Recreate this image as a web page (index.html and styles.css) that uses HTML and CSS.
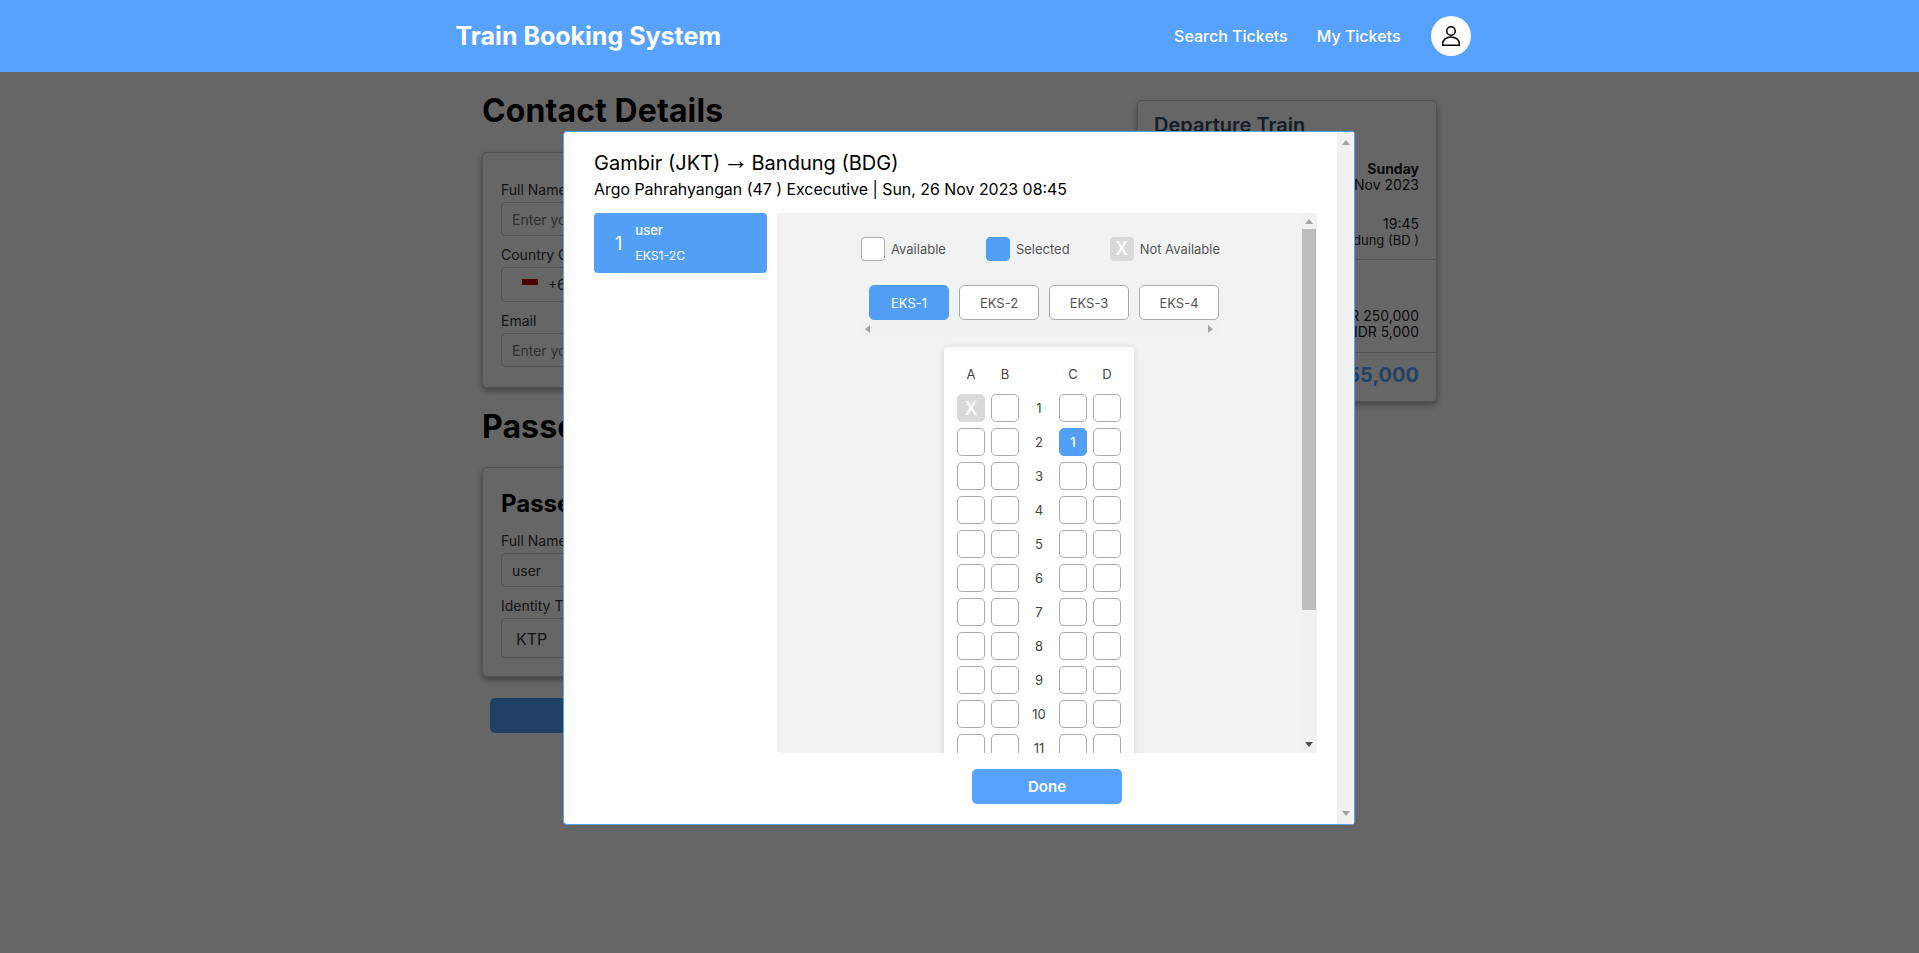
FILE: index.html
```html
<!DOCTYPE html>
<html lang="en">
<head>
    <meta charset="UTF-8">
    <meta name="viewport" content="width=device-width, initial-scale=1.0">
    <title>Train Booking System</title>
    <link rel="stylesheet" href="styles.css">
</head>
<body>
    <header class="topbar">
        <div class="topbar-inner">
            <div class="brand">Train Booking System</div>
            <nav class="topnav">
                <a href="#search">Search Tickets</a>
                <a href="#tickets">My Tickets</a>
                <span class="avatar">
                    <svg width="40" height="40" viewBox="0 0 40 40" fill="none" stroke="#000" stroke-width="1.5">
                        <circle cx="20" cy="15" r="4.3"/>
                        <path d="M11.7 29.3v-1.6c0-4 3.6-6.6 8.3-6.6s8.3 2.6 8.3 6.6v1.6z"/>
                    </svg>
                </span>
            </nav>
        </div>
    </header>

    <main class="page">
        <div class="forms">
            <h1>Contact Details</h1>
            <section class="card contact-card">
                <div class="field">
                    <label>Full Name</label>
                    <input type="text" placeholder="Enter your full name">
                </div>
                <div class="field">
                    <label>Country Code</label>
                    <div class="phone-input">
                        <span class="flag"></span>
                        <span>+62</span>
                    </div>
                </div>
                <div class="field">
                    <label>Email</label>
                    <input type="text" placeholder="Enter your email">
                </div>
            </section>

            <h1>Passenger Details</h1>
            <section class="card passenger-card">
                <h2>Passenger 1</h2>
                <div class="field">
                    <label>Full Name</label>
                    <input type="text" value="user">
                </div>
                <div class="field">
                    <label>Identity Type</label>
                    <div class="select-input">KTP</div>
                </div>
            </section>
            <button class="continue-btn">Continue</button>
        </div>

        <aside class="card summary">
            <h3>Departure Train</h3>
            <div class="summary-block">
                <div class="strong">Sunday</div>
                <div>26 Nov 2023</div>
                <div class="time">19:45</div>
                <div class="small">Bandung (BD )</div>
            </div>
            <div class="summary-block prices">
                <div>IDR 250,000</div>
                <div>IDR 5,000</div>
            </div>
            <div class="summary-total">IDR 255,000</div>
        </aside>
    </main>

    <div class="overlay"></div>

    <div class="modal">
        <div class="modal-body">
            <div class="modal-title">Gambir (JKT) <span class="route-arrow">→</span> Bandung (BDG)</div>
            <div class="modal-sub">Argo Pahrahyangan (47 ) Excecutive | Sun, 26 Nov 2023 08:45</div>

            <div class="modal-row">
                <div class="passenger-tab">
                    <span class="passenger-num">1</span>
                    <div class="passenger-info">
                        <div class="passenger-name">user</div>
                        <div class="passenger-seat">EKS1-2C</div>
                    </div>
                </div>

                <div class="seat-panel">
                    <div class="seat-scroll">
                        <div class="legend">
                            <div class="legend-item"><span class="seat-key"></span>Available</div>
                            <div class="legend-item"><span class="seat-key key-selected"></span>Selected</div>
                            <div class="legend-item"><span class="seat-key key-taken">X</span>Not Available</div>
                        </div>

                        <div class="coaches">
                            <div class="coach-tabs">
                                <button class="coach active">EKS-1</button>
                                <button class="coach">EKS-2</button>
                                <button class="coach">EKS-3</button>
                                <button class="coach">EKS-4</button>
                            </div>
                            <div class="hbar">
                                <span class="arrow arrow-left"></span>
                                <span class="arrow arrow-right"></span>
                            </div>
                        </div>

                        <div class="seat-map">
                            <div class="seat-head">A</div><div class="seat-head">B</div><div class="seat-head"></div><div class="seat-head">C</div><div class="seat-head">D</div>
                            <div class="seat taken">X</div><div class="seat"></div><div class="row-num">1</div><div class="seat"></div><div class="seat"></div>
                            <div class="seat"></div><div class="seat"></div><div class="row-num">2</div><div class="seat selected">1</div><div class="seat"></div>
                            <div class="seat"></div><div class="seat"></div><div class="row-num">3</div><div class="seat"></div><div class="seat"></div>
                            <div class="seat"></div><div class="seat"></div><div class="row-num">4</div><div class="seat"></div><div class="seat"></div>
                            <div class="seat"></div><div class="seat"></div><div class="row-num">5</div><div class="seat"></div><div class="seat"></div>
                            <div class="seat"></div><div class="seat"></div><div class="row-num">6</div><div class="seat"></div><div class="seat"></div>
                            <div class="seat"></div><div class="seat"></div><div class="row-num">7</div><div class="seat"></div><div class="seat"></div>
                            <div class="seat"></div><div class="seat"></div><div class="row-num">8</div><div class="seat"></div><div class="seat"></div>
                            <div class="seat"></div><div class="seat"></div><div class="row-num">9</div><div class="seat"></div><div class="seat"></div>
                            <div class="seat"></div><div class="seat"></div><div class="row-num">10</div><div class="seat"></div><div class="seat"></div>
                            <div class="seat"></div><div class="seat"></div><div class="row-num">11</div><div class="seat"></div><div class="seat"></div>
                        </div>
                    </div>
                    <div class="vbar">
                        <span class="arrow arrow-up"></span>
                        <span class="vbar-thumb"></span>
                        <span class="arrow arrow-down dark"></span>
                    </div>
                </div>
            </div>

            <div class="modal-actions">
                <button class="done-btn">Done</button>
            </div>
        </div>
        <div class="modal-bar">
            <span class="arrow arrow-up"></span>
            <span class="arrow arrow-down"></span>
        </div>
    </div>
</body>
</html>
```

FILE: styles.css
```css
* {
    margin: 0;
    padding: 0;
    box-sizing: border-box;
    font-family: 'Inter', sans-serif;
}

html, body {
    height: 100%;
    overflow: hidden;
}

body {
    background-color: #fff;
    color: #000;
}

/* top bar stays above the overlay */
.topbar {
    position: relative;
    z-index: 20;
    height: 72px;
    background-color: #57a2ff;
}

.topbar-inner {
    width: 1024px;
    height: 100%;
    margin: 0 auto;
    padding: 0 1px 0 8px;
    display: flex;
    justify-content: space-between;
    align-items: center;
}

.brand {
    color: #fff;
    font-size: 25px;
    font-weight: 700;
}

.topnav {
    display: flex;
    align-items: center;
    gap: 29px;
}

.topnav a {
    color: #fff;
    text-decoration: none;
    font-size: 16px;
    font-weight: 500;
}

.topnav a + a {
    margin-right: 1px;
}

.avatar {
    width: 40px;
    height: 40px;
    border-radius: 50%;
    background-color: #fff;
    display: block;
}

.avatar svg {
    display: block;
}

/* page behind the modal */
.page {
    width: 955px;
    margin: 0 auto;
    padding-top: 20px;
    display: flex;
    gap: 24px;
    align-items: flex-start;
}

.forms {
    width: 631px;
}

.forms h1 {
    font-size: 32px;
    font-weight: 700;
    line-height: 38px;
    letter-spacing: 0.1px;
}

.card {
    background-color: #fff;
    border: 1px solid #ccc;
    border-radius: 5px;
    box-shadow: 0 3px 6px rgba(0, 0, 0, 0.35);
}

.contact-card {
    margin: 22px 0 20px;
    padding: 28px 18px 20px;
}

.passenger-card {
    margin-top: 21px;
    padding: 21px 18px 18px;
}

.passenger-card h2 {
    font-size: 24px;
    font-weight: 700;
    line-height: 29px;
    margin-bottom: 14px;
}

.field {
    margin-bottom: 10px;
}

.field:last-child {
    margin-bottom: 0;
}

.field label {
    display: block;
    font-size: 14px;
    line-height: 17px;
    color: #333;
    margin-bottom: 4px;
}

.field input, .phone-input {
    width: 100%;
    height: 34px;
    padding: 0 10px;
    border: 1px solid #ccc;
    border-radius: 4px;
    font-size: 14px;
    color: #333;
}

.field input::placeholder {
    color: #777;
}

.phone-input {
    height: 35px;
    padding-left: 20px;
    display: flex;
    align-items: center;
    gap: 10px;
}

.flag {
    width: 16px;
    height: 12px;
    margin-top: 1px;
    background: linear-gradient(#c00000 50%, #fff 50%);
}

.select-input {
    height: 40px;
    padding: 0 14px;
    border: 1px solid #ccc;
    border-radius: 4px;
    font-size: 16px;
    line-height: 40px;
    color: #333;
}

.continue-btn {
    display: block;
    width: 615px;
    height: 35px;
    margin: 21px 0 0 8px;
    background-color: #52a2ff;
    color: #fff;
    border: none;
    border-radius: 5px;
    font-size: 14px;
    font-weight: 600;
}

.summary {
    width: 300px;
    height: 302px;
    margin-top: 8px;
    flex-shrink: 0;
}

.summary h3 {
    padding: 11px 16px 0;
    font-size: 20px;
    font-weight: 600;
    line-height: 26px;
    color: #3a4a60;
}

.summary-block {
    padding: 0 17px;
    text-align: right;
    font-size: 14px;
    line-height: 16px;
    color: #222;
}

.summary-block .strong {
    margin-top: 23px;
    font-weight: 700;
}

.summary-block .time {
    margin-top: 23px;
}

.summary-block .small {
    font-size: 13px;
}

.prices {
    margin-top: 11px;
    padding-top: 48px;
    padding-bottom: 12px;
    border-top: 1px solid #ccc;
}

.summary-total {
    padding: 9px 17px;
    border-top: 1px solid #ccc;
    text-align: right;
    font-size: 20px;
    font-weight: 700;
    line-height: 26px;
    color: #57a2ff;
}

.overlay {
    position: fixed;
    inset: 0;
    z-index: 10;
    background-color: rgba(0, 0, 0, 0.6);
}

/* modal */
.modal {
    position: fixed;
    top: 131px;
    left: 563px;
    z-index: 15;
    width: 792px;
    height: 694px;
    display: flex;
    background-color: #fff;
    border: 1px solid #57a2ff;
    border-radius: 4px;
}

.modal-body {
    flex: 1;
    min-width: 0;
    padding: 19px 20px 0 30px;
}

.modal-title {
    font-size: 20px;
    line-height: 24px;
}

.route-arrow {
    font-family: 'Liberation Sans', sans-serif;
    font-size: 26px;
    line-height: 0;
    margin: 0 -3px;
    vertical-align: 1px;
}

.modal-sub {
    margin-top: 5px;
    font-size: 15.9px;
    line-height: 19px;
}

.modal-row {
    margin-top: 14px;
    display: flex;
    align-items: flex-start;
    gap: 10px;
}

.passenger-tab {
    width: 173px;
    height: 60px;
    flex-shrink: 0;
    padding-left: 21px;
    display: flex;
    align-items: center;
    gap: 13px;
    background-color: #529ff5;
    border-radius: 4px;
    color: #fff;
}

.passenger-num {
    font-size: 18px;
}

.passenger-name {
    margin-top: -1px;
    font-size: 13px;
    line-height: 16px;
    font-weight: 500;
}

.passenger-seat {
    margin-top: 10px;
    font-size: 12.2px;
    line-height: 16px;
}

.seat-panel {
    width: 540px;
    height: 540px;
    display: flex;
    background-color: #f1f3f3;
    border-radius: 4px;
    overflow: hidden;
}

.seat-scroll {
    flex: 1;
    min-width: 0;
    padding-top: 24px;
    overflow: hidden;
    display: flex;
    flex-direction: column;
    align-items: center;
}

.legend {
    margin-left: 3px;
    display: flex;
    gap: 40px;
}

.legend-item {
    display: flex;
    align-items: center;
    gap: 6px;
    font-size: 13px;
    line-height: 22px;
    color: #555;
}

.seat-key {
    width: 24px;
    height: 24px;
    display: flex;
    justify-content: center;
    align-items: center;
    background-color: #fff;
    border: 1px solid #aaa;
    border-radius: 4px;
}

.key-selected {
    background-color: #529ff5;
    border-color: #529ff5;
}

.key-taken {
    background-color: #d9d9d9;
    border-color: #d9d9d9;
    color: #fff;
    font-size: 18px;
    font-weight: 500;
}

.coaches {
    width: 360px;
    margin-top: 24px;
}

.coach-tabs {
    padding-left: 10px;
    display: flex;
    gap: 10px;
}

.coach {
    width: 80px;
    height: 35px;
    background-color: #fff;
    border: 1px solid #aaa;
    border-radius: 5px;
    font-size: 13px;
    color: #555;
}

.coach.active {
    background-color: #529ff5;
    border-color: #529ff5;
    color: #fff;
}

.hbar {
    height: 17px;
    padding: 0 6px;
    display: flex;
    justify-content: space-between;
    align-items: center;
    background-color: #f1f1f1;
}

.seat-map {
    flex-shrink: 0;
    width: 190px;
    margin-top: 10px;
    padding: 12px 13px;
    display: grid;
    grid-template-columns: repeat(5, 28px);
    grid-template-rows: 29px;
    grid-auto-rows: 28px;
    gap: 6px;
    background-color: #fff;
    border-radius: 4px;
    box-shadow: 0 1px 6px rgba(0, 0, 0, 0.15);
}

.seat-head, .row-num {
    display: flex;
    justify-content: center;
    align-items: center;
    font-size: 13px;
    color: #444;
}

.seat {
    display: flex;
    justify-content: center;
    align-items: center;
    border: 1px solid #aaa;
    border-radius: 5px;
    font-size: 13px;
}

.seat.taken {
    background-color: #d9d9d9;
    border-color: #d9d9d9;
    color: #fff;
    font-size: 18px;
    font-weight: 500;
}

.seat.selected {
    background-color: #529ff5;
    border-color: #529ff5;
    color: #fff;
    font-weight: 500;
}

.modal-actions {
    margin-top: 16px;
    margin-left: 183px;
    display: flex;
    justify-content: center;
}

.done-btn {
    width: 150px;
    height: 35px;
    background-color: #57a2ff;
    color: #fff;
    border: none;
    border-radius: 5px;
    font-size: 15px;
    font-weight: 600;
}

/* drawn scrollbars */
.vbar {
    width: 16px;
    flex-shrink: 0;
    padding: 6px 0;
    display: flex;
    flex-direction: column;
    align-items: center;
    background-color: #f1f1f1;
}

.vbar-thumb {
    width: 14px;
    height: 381px;
    margin: 5px 0 auto;
    background-color: #bdbdbd;
}

.modal-bar {
    width: 17px;
    flex-shrink: 0;
    padding: 8px 0;
    display: flex;
    flex-direction: column;
    justify-content: space-between;
    align-items: center;
    background-color: #f1f1f1;
}

.arrow {
    width: 0;
    height: 0;
    border: 4px solid transparent;
}

.arrow-up {
    border-top-width: 0;
    border-bottom: 5px solid #a3a3a3;
}

.arrow-down {
    border-bottom-width: 0;
    border-top: 5px solid #a3a3a3;
}

.arrow-down.dark {
    border-top-color: #505050;
}

.arrow-left {
    border-left-width: 0;
    border-right: 5px solid #a3a3a3;
}

.arrow-right {
    border-right-width: 0;
    border-left: 5px solid #a3a3a3;
}
```
